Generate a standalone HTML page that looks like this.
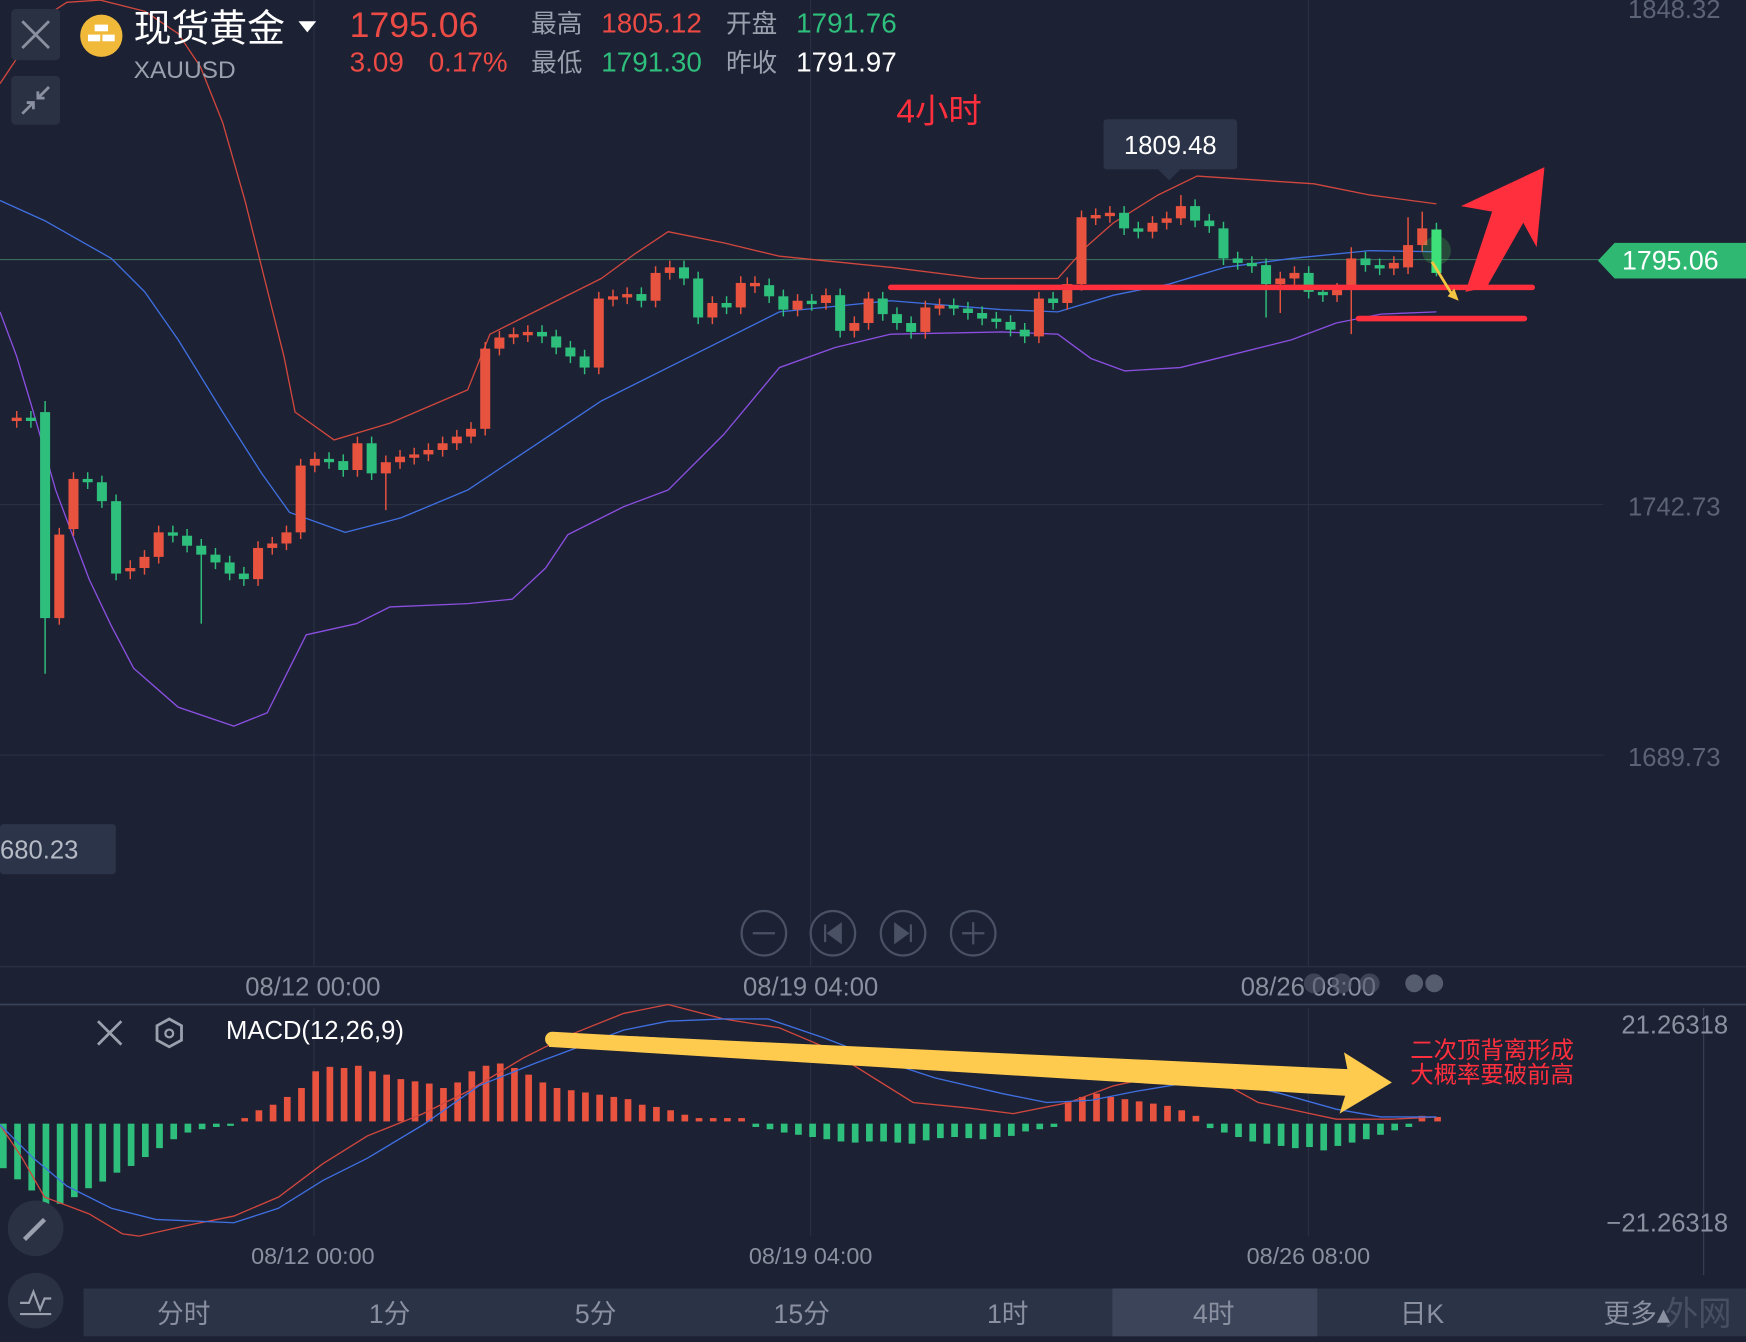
<!DOCTYPE html>
<html><head><meta charset="utf-8"><style>
html,body{margin:0;padding:0;background:#1c2133;width:1746px;height:1342px;overflow:hidden}
svg{display:block}
text{font-family:"Liberation Sans","Noto Sans CJK SC",sans-serif}
</style></head><body>
<svg width="1746" height="1342" viewBox="0 0 1568 1205" xmlns="http://www.w3.org/2000/svg">
<rect width="1568" height="1205" fill="#1c2133"/>
<g stroke="#2a3145" stroke-width="1">
<line x1="282" y1="0" x2="282" y2="868"/><line x1="728" y1="0" x2="728" y2="868"/><line x1="1175" y1="0" x2="1175" y2="868"/>
<line x1="0" y1="453" x2="1440" y2="453"/><line x1="0" y1="678" x2="1440" y2="678"/>
<line x1="282" y1="905" x2="282" y2="1110"/><line x1="728" y1="905" x2="728" y2="1110"/><line x1="1175" y1="905" x2="1175" y2="1110"/>
</g>
<line x1="0" y1="233" x2="1440" y2="233" stroke="#3a6a5a" stroke-width="1"/>
<line x1="0" y1="868" x2="1568" y2="868" stroke="#2c3347"/>
<line x1="0" y1="902" x2="1568" y2="902" stroke="#3a4257" stroke-width="1.5"/>
<line x1="1530" y1="905" x2="1530" y2="1145" stroke="#3a4257"/>
<polyline fill="none" stroke="#d0473e" stroke-width="1.2" stroke-linejoin="round" points="0,75 20,45 40,15 60,2 90,0 130,10 160,30 180,60 200,110 220,180 240,260 255,320 265,370 300,395 350,380 420,350 440,300 480,280 540,250 570,228 600,208 650,218 700,230 800,240 880,250 950,250 975,222 1000,200 1040,175 1075,158 1180,165 1230,175 1290,183"/>
<polyline fill="none" stroke="#3f6fe0" stroke-width="1.2" stroke-linejoin="round" points="0,180 40,198 100,232 130,262 160,305 200,370 235,425 260,460 310,478 360,465 420,440 480,400 540,360 620,320 700,280 800,270 900,278 950,280 1000,265 1050,255 1100,240 1160,232 1230,225 1290,226"/>
<polyline fill="none" stroke="#8a4fe0" stroke-width="1.2" stroke-linejoin="round" points="0,280 15,320 30,370 50,440 80,520 100,562 120,600 160,635 210,652 240,640 255,610 275,570 320,560 350,545 420,542 460,538 490,510 510,480 560,455 600,440 650,390 700,330 750,312 800,300 900,298 950,300 980,322 1010,333 1060,330 1100,320 1160,305 1200,290 1240,282 1290,280"/>
<path fill="none" stroke="#e8533f" stroke-width="1.3" d="M15 369V384 M53.25 474V561 M66 424V481 M117 503V520 M129.75 494V516 M142.5 472V506 M231.75 486V526 M244.5 482V498 M257.25 472V494 M270 412V484 M282.75 406V424 M321 392V428 M346.5 409V458 M359.25 404V421 M372 402V417 M384.75 398V414 M397.5 392V410 M410.25 386V404 M423 379V398 M435.75 307V391 M448.5 297V319 M461.25 294V309 M474 292V307 M537.75 262V336 M550.5 260V275 M563.25 258V273 M588.75 239V276 M601.5 234V251 M639.75 266V291 M665.25 248V282 M678 248V263 M716.25 264V284 M741.75 259V278 M767.25 284V303 M780 262V296 M831 270V304 M843.75 268V283 M933 262V308 M958.5 249V278 M971.25 189V261 M984 187V202 M996.75 185V200 M1035 194V214 M1047.75 190V206 M1060.5 175V202 M1149.75 244V281 M1162.5 239V256 M1200.75 254V271 M1213.5 222V300 M1251.75 230V247 M1264.5 195V246 M1277.25 190V226"/>
<path fill="none" stroke="#2fbf7c" stroke-width="1.3" d="M27.75 369V384 M40.5 360V605 M78.75 424V439 M91.5 427V456 M104.25 444V521 M155.25 472V487 M168 475V496 M180.75 484V560 M193.5 492V511 M206.25 499V521 M219 509V526 M295.5 406V421 M308.25 408V428 M333.75 392V431 M486.75 292V308 M499.5 296V318 M512.25 306V326 M525 314V336 M576 258V276 M614.25 234V256 M627 244V291 M652.5 266V282 M690.75 250V272 M703.5 260V284 M729 264V279 M754.5 259V303 M792.75 262V288 M805.5 276V296 M818.25 284V304 M856.5 268V283 M869.25 271V287 M882 275V292 M894.75 280V295 M907.5 283V302 M920.25 290V308 M945.75 262V278 M1009.5 185V211 M1022.25 199V214 M1073.25 179V204 M1086 192V209 M1098.75 199V238 M1111.5 226V242 M1124.25 230V245 M1137 232V285 M1175.25 239V268 M1188 256V271 M1226.25 226V244 M1239 232V247 M1290 200V248"/>
<g fill="#e8533f">
<rect x="10.5" y="375" width="9" height="3"/><rect x="48.75" y="480" width="9" height="75"/><rect x="61.5" y="430" width="9" height="45"/><rect x="112.5" y="510" width="9" height="3"/><rect x="125.25" y="500" width="9" height="10"/><rect x="138" y="478" width="9" height="22"/><rect x="227.25" y="492" width="9" height="28"/><rect x="240" y="488" width="9" height="4"/><rect x="252.75" y="478" width="9" height="10"/><rect x="265.5" y="418" width="9" height="60"/><rect x="278.25" y="412" width="9" height="6"/><rect x="316.5" y="398" width="9" height="24"/><rect x="342" y="415" width="9" height="10"/><rect x="354.75" y="410" width="9" height="5"/><rect x="367.5" y="408" width="9" height="3"/><rect x="380.25" y="404" width="9" height="4"/><rect x="393" y="398" width="9" height="6"/><rect x="405.75" y="392" width="9" height="6"/><rect x="418.5" y="385" width="9" height="7"/><rect x="431.25" y="313" width="9" height="72"/><rect x="444" y="303" width="9" height="10"/><rect x="456.75" y="300" width="9" height="3"/><rect x="469.5" y="298" width="9" height="3"/><rect x="533.25" y="268" width="9" height="62"/><rect x="546" y="266" width="9" height="3"/><rect x="558.75" y="264" width="9" height="3"/><rect x="584.25" y="245" width="9" height="25"/><rect x="597" y="240" width="9" height="5"/><rect x="635.25" y="272" width="9" height="13"/><rect x="660.75" y="254" width="9" height="22"/><rect x="673.5" y="254" width="9" height="3"/><rect x="711.75" y="270" width="9" height="8"/><rect x="737.25" y="265" width="9" height="7"/><rect x="762.75" y="290" width="9" height="7"/><rect x="775.5" y="268" width="9" height="22"/><rect x="826.5" y="276" width="9" height="22"/><rect x="839.25" y="274" width="9" height="3"/><rect x="928.5" y="268" width="9" height="34"/><rect x="954" y="255" width="9" height="17"/><rect x="966.75" y="195" width="9" height="60"/><rect x="979.5" y="193" width="9" height="3"/><rect x="992.25" y="191" width="9" height="3"/><rect x="1030.5" y="200" width="9" height="8"/><rect x="1043.25" y="196" width="9" height="4"/><rect x="1056" y="185" width="9" height="11"/><rect x="1145.25" y="250" width="9" height="5"/><rect x="1158" y="245" width="9" height="5"/><rect x="1196.25" y="260" width="9" height="5"/><rect x="1209" y="232" width="9" height="28"/><rect x="1247.25" y="236" width="9" height="5"/><rect x="1260" y="220" width="9" height="20"/><rect x="1272.75" y="205" width="9" height="15"/>
</g>
<g fill="#2fbf7c">
<rect x="23.25" y="375" width="9" height="3"/><rect x="36" y="370" width="9" height="185"/><rect x="74.25" y="430" width="9" height="3"/><rect x="87" y="433" width="9" height="17"/><rect x="99.75" y="450" width="9" height="65"/><rect x="150.75" y="478" width="9" height="3"/><rect x="163.5" y="481" width="9" height="9"/><rect x="176.25" y="490" width="9" height="8"/><rect x="189" y="498" width="9" height="7"/><rect x="201.75" y="505" width="9" height="10"/><rect x="214.5" y="515" width="9" height="5"/><rect x="291" y="412" width="9" height="3"/><rect x="303.75" y="414" width="9" height="8"/><rect x="329.25" y="398" width="9" height="27"/><rect x="482.25" y="298" width="9" height="4"/><rect x="495" y="302" width="9" height="10"/><rect x="507.75" y="312" width="9" height="8"/><rect x="520.5" y="320" width="9" height="10"/><rect x="571.5" y="264" width="9" height="6"/><rect x="609.75" y="240" width="9" height="10"/><rect x="622.5" y="250" width="9" height="35"/><rect x="648" y="272" width="9" height="4"/><rect x="686.25" y="256" width="9" height="10"/><rect x="699" y="266" width="9" height="12"/><rect x="724.5" y="270" width="9" height="3"/><rect x="750" y="265" width="9" height="32"/><rect x="788.25" y="268" width="9" height="14"/><rect x="801" y="282" width="9" height="8"/><rect x="813.75" y="290" width="9" height="8"/><rect x="852" y="274" width="9" height="3"/><rect x="864.75" y="277" width="9" height="4"/><rect x="877.5" y="281" width="9" height="5"/><rect x="890.25" y="286" width="9" height="3"/><rect x="903" y="289" width="9" height="7"/><rect x="915.75" y="296" width="9" height="6"/><rect x="941.25" y="268" width="9" height="4"/><rect x="1005" y="191" width="9" height="14"/><rect x="1017.75" y="205" width="9" height="3"/><rect x="1068.75" y="185" width="9" height="13"/><rect x="1081.5" y="198" width="9" height="5"/><rect x="1094.25" y="205" width="9" height="27"/><rect x="1107" y="232" width="9" height="4"/><rect x="1119.75" y="236" width="9" height="3"/><rect x="1132.5" y="238" width="9" height="17"/><rect x="1170.75" y="245" width="9" height="17"/><rect x="1183.5" y="262" width="9" height="3"/><rect x="1221.75" y="232" width="9" height="6"/><rect x="1234.5" y="238" width="9" height="3"/>
</g>
<circle cx="1290" cy="225" r="13" fill="#5cff5c" opacity="0.18"/>
<rect x="1285.5" y="206" width="9" height="39" fill="#3ee07a"/>
<line x1="800" y1="258" x2="1376" y2="258" stroke="#ff2f3d" stroke-width="5" stroke-linecap="round"/>
<line x1="1220" y1="286" x2="1369" y2="286" stroke="#ff2f3d" stroke-width="5" stroke-linecap="round"/>
<polygon points="1316,262 1335,258 1368,200 1380,222 1387,150 1312,185 1340,190" fill="#ff2f3d"/>
<line x1="1286" y1="235" x2="1305" y2="266" stroke="#f4c542" stroke-width="2.5"/>
<polygon points="1300,266 1310,270 1306,259" fill="#f4c542"/>
<g fill="#2fbf7c">
<rect x="0" y="1009" width="6" height="40"/><rect x="12.75" y="1009" width="6" height="50"/><rect x="25.5" y="1009" width="6" height="60"/><rect x="38.25" y="1009" width="6" height="78"/><rect x="51" y="1009" width="6" height="72"/><rect x="63.75" y="1009" width="6" height="66"/><rect x="76.5" y="1009" width="6" height="58"/><rect x="89.25" y="1009" width="6" height="52"/><rect x="102" y="1009" width="6" height="44"/><rect x="114.75" y="1009" width="6" height="38"/><rect x="127.5" y="1009" width="6" height="30"/><rect x="140.25" y="1009" width="6" height="22"/><rect x="153" y="1009" width="6" height="14"/><rect x="165.75" y="1009" width="6" height="8"/><rect x="178.5" y="1009" width="6" height="5"/><rect x="191.25" y="1009" width="6" height="3"/><rect x="204" y="1009" width="6" height="2"/>
<rect x="675.75" y="1009" width="6" height="3"/><rect x="688.5" y="1009" width="6" height="5"/><rect x="701.25" y="1009" width="6" height="8"/><rect x="714" y="1009" width="6" height="10"/><rect x="726.75" y="1009" width="6" height="12"/><rect x="739.5" y="1009" width="6" height="14"/><rect x="752.25" y="1009" width="6" height="16"/><rect x="765" y="1009" width="6" height="17"/><rect x="777.75" y="1009" width="6" height="16"/><rect x="790.5" y="1009" width="6" height="16"/><rect x="803.25" y="1009" width="6" height="17"/><rect x="816" y="1009" width="6" height="18"/><rect x="828.75" y="1009" width="6" height="15"/><rect x="841.5" y="1009" width="6" height="13"/><rect x="854.25" y="1009" width="6" height="12"/><rect x="867" y="1009" width="6" height="13"/><rect x="879.75" y="1009" width="6" height="14"/><rect x="892.5" y="1009" width="6" height="12"/><rect x="905.25" y="1009" width="6" height="11"/><rect x="918" y="1009" width="6" height="7"/><rect x="930.75" y="1009" width="6" height="5"/><rect x="943.5" y="1009" width="6" height="3"/>
<rect x="1083.75" y="1009" width="6" height="4"/><rect x="1096.5" y="1009" width="6" height="8"/><rect x="1109.25" y="1009" width="6" height="12"/><rect x="1122" y="1009" width="6" height="16"/><rect x="1134.75" y="1009" width="6" height="18"/><rect x="1147.5" y="1009" width="6" height="20"/><rect x="1160.25" y="1009" width="6" height="22"/><rect x="1173" y="1009" width="6" height="21"/><rect x="1185.75" y="1009" width="6" height="24"/><rect x="1198.5" y="1009" width="6" height="20"/><rect x="1211.25" y="1009" width="6" height="17"/><rect x="1224" y="1009" width="6" height="14"/><rect x="1236.75" y="1009" width="6" height="10"/><rect x="1249.5" y="1009" width="6" height="6"/><rect x="1262.25" y="1009" width="6" height="3"/>
</g>
<g fill="#e8533f">
<rect x="216.75" y="1004" width="6" height="3"/><rect x="229.5" y="997" width="6" height="10"/><rect x="242.25" y="992" width="6" height="15"/><rect x="255" y="985" width="6" height="22"/><rect x="267.75" y="977" width="6" height="30"/><rect x="280.5" y="962" width="6" height="45"/><rect x="293.25" y="958" width="6" height="49"/><rect x="306" y="959" width="6" height="48"/><rect x="318.75" y="957" width="6" height="50"/><rect x="331.5" y="962" width="6" height="45"/><rect x="344.25" y="965" width="6" height="42"/><rect x="357" y="969" width="6" height="38"/><rect x="369.75" y="971" width="6" height="36"/><rect x="382.5" y="973" width="6" height="34"/><rect x="395.25" y="977" width="6" height="30"/><rect x="408" y="972" width="6" height="35"/><rect x="420.75" y="962" width="6" height="45"/><rect x="433.5" y="957" width="6" height="50"/><rect x="446.25" y="955" width="6" height="52"/><rect x="459" y="959" width="6" height="48"/><rect x="471.75" y="965" width="6" height="42"/><rect x="484.5" y="972" width="6" height="35"/><rect x="497.25" y="977" width="6" height="30"/><rect x="510" y="979" width="6" height="28"/><rect x="522.75" y="981" width="6" height="26"/><rect x="535.5" y="983" width="6" height="24"/><rect x="548.25" y="985" width="6" height="22"/><rect x="561" y="987" width="6" height="20"/><rect x="573.75" y="992" width="6" height="15"/><rect x="586.5" y="994" width="6" height="13"/><rect x="599.25" y="997" width="6" height="10"/><rect x="612" y="1001" width="6" height="6"/><rect x="624.75" y="1004" width="6" height="3"/><rect x="637.5" y="1004" width="6" height="3"/><rect x="650.25" y="1004" width="6" height="3"/><rect x="663" y="1004" width="6" height="3"/>
<rect x="956.25" y="989" width="6" height="18"/><rect x="969" y="985" width="6" height="22"/><rect x="981.75" y="982" width="6" height="25"/><rect x="994.5" y="985" width="6" height="22"/><rect x="1007.25" y="987" width="6" height="20"/><rect x="1020" y="989" width="6" height="18"/><rect x="1032.75" y="991" width="6" height="16"/><rect x="1045.5" y="993" width="6" height="14"/><rect x="1058.25" y="997" width="6" height="10"/><rect x="1071" y="1002" width="6" height="5"/>
<rect x="1274" y="1002" width="6" height="5"/><rect x="1288" y="1003" width="6" height="4"/>
</g>
<polyline fill="none" stroke="#d0473e" stroke-width="1.2" points="0,1010 20,1040 40,1075 80,1090 110,1108 125,1110 170,1100 210,1092 250,1075 290,1045 330,1020 380,1000 420,980 470,950 510,930 560,910 600,902 650,915 700,923 740,940 820,990 870,995 910,1000 960,990 1000,975 1060,962 1090,968 1130,990 1200,1005 1250,1005 1290,1003"/>
<polyline fill="none" stroke="#3f6fe0" stroke-width="1.2" points="0,1010 30,1040 60,1065 100,1085 140,1095 210,1098 250,1085 290,1060 330,1040 380,1010 430,975 480,955 520,940 560,925 600,917 650,915 690,915 740,932 800,955 840,968 900,982 940,990 980,988 1020,980 1080,970 1120,975 1150,982 1200,996 1240,1003 1290,1003"/>
<polygon points="493,927 1210,960 1207,945 1250,972 1203,1000 1208,984 493,940" fill="#ffcb4f"/>
<line x1="496" y1="933" x2="1210" y2="972" stroke="#ffcb4f" stroke-width="13" stroke-linecap="round"/>
<text x="1340" y="950" fill="#ff2f3d" font-size="21" text-anchor="middle">二次顶背离形成</text>
<text x="1340" y="972" fill="#ff2f3d" font-size="21" text-anchor="middle">大概率要破前高</text>
<rect x="10" y="8" width="44" height="46" rx="4" fill="#2a3142"/>
<path d="M20 19 L44 43 M44 19 L20 43" stroke="#8a90a0" stroke-width="2.5"/>
<rect x="10" y="68" width="44" height="44" rx="4" fill="#2a3142"/>
<path d="M20 102 L30 92 M24 92 L30 92 L30 98 M44 78 L34 88 M34 82 L34 88 L40 88" stroke="#8a90a0" stroke-width="2.5" fill="none"/>
<circle cx="91" cy="32" r="19" fill="#f0b93a"/>
<rect x="85" y="22" width="12" height="6" fill="#fff"/><rect x="79" y="31" width="11" height="6" fill="#fff"/><rect x="92" y="31" width="11" height="6" fill="#fff"/>
<text x="120" y="37" fill="#fff" font-size="34">现货黄金</text>
<polygon points="268,19 284,19 276,29" fill="#fff"/>
<text x="120" y="70" fill="#9aa0ad" font-size="22">XAUUSD</text>
<text x="314" y="33" fill="#ec4a44" font-size="32">1795.06</text>
<text x="314" y="64" fill="#ec4a44" font-size="25">3.09</text>
<text x="385" y="64" fill="#ec4a44" font-size="25">0.17%</text>
<g font-size="25">
<text x="477" y="29" fill="#9aa0ad" font-size="23">最高</text>
<text x="540" y="29" fill="#ec4a44">1805.12</text>
<text x="652" y="29" fill="#9aa0ad" font-size="23">开盘</text>
<text x="715" y="29" fill="#2fbf7c">1791.76</text>
<text x="477" y="64" fill="#9aa0ad" font-size="23">最低</text>
<text x="540" y="64" fill="#2fbf7c">1791.30</text>
<text x="652" y="64" fill="#9aa0ad" font-size="23">昨收</text>
<text x="715" y="64" fill="#fff">1791.97</text>
</g>
<text x="805" y="110" fill="#ff2f3d" font-size="30">4小时</text>
<rect x="991" y="107" width="120" height="45" rx="3" fill="#2b3448"/>
<polygon points="1040,152 1060,152 1050,162" fill="#2b3448"/>
<text x="1051" y="138" fill="#fff" font-size="23" text-anchor="middle">1809.48</text>
<rect x="0" y="740" width="104" height="45" rx="3" fill="#2b3448"/>
<text x="0" y="771" fill="#b5bac5" font-size="23">680.23</text>
<polygon points="1435,234 1450,218 1568,218 1568,250 1450,250" fill="#2eb872"/>
<text x="1500" y="242" fill="#fff" font-size="24" text-anchor="middle">1795.06</text>
<g fill="#5c6376" font-size="23">
<text x="1462" y="16">1848.32</text><text x="1462" y="463">1742.73</text><text x="1462" y="688">1689.73</text>
</g>
<g stroke="#4a5165" stroke-width="2" fill="none">
<circle cx="686" cy="838" r="20"/><circle cx="748" cy="838" r="20"/><circle cx="811" cy="838" r="20"/><circle cx="874" cy="838" r="20"/>
<path d="M676 838 H696 M864 838 H884 M874 828 V848"/>
</g>
<path d="M741 830 V846 M755 830 L744 838 L755 846Z M818 830 V846 M804 830 L815 838 L804 846Z" fill="#4a5165" stroke="#4a5165" stroke-width="2"/>
<g fill="#8a90a0" font-size="23" text-anchor="middle">
<text x="281" y="894">08/12 00:00</text><text x="728" y="894">08/19 04:00</text><text x="1175" y="894">08/26 08:00</text>
</g>
<g fill="#555c6e"><circle cx="1270" cy="883" r="8"/><circle cx="1288" cy="883" r="8"/><circle cx="1180" cy="883" r="9" opacity=".6"/><circle cx="1205" cy="883" r="9" opacity=".6"/><circle cx="1230" cy="883" r="9" opacity=".6"/></g>
<path d="M88 917 L109 938 M109 917 L88 938" stroke="#9aa0ad" stroke-width="2.5"/>
<polygon points="152,915 163,921 163,934 152,940 141,934 141,921" fill="none" stroke="#9aa0ad" stroke-width="2.5"/>
<circle cx="152" cy="928" r="3.5" fill="none" stroke="#9aa0ad" stroke-width="2"/>
<text x="203" y="933" fill="#fff" font-size="23">MACD(12,26,9)</text>
<text x="1552" y="928" fill="#8a90a0" font-size="23" text-anchor="end">21.26318</text>
<text x="1552" y="1106" fill="#8a90a0" font-size="23" text-anchor="end">−21.26318</text>
<g fill="#8a90a0" font-size="21" text-anchor="middle">
<text x="281" y="1135">08/12 00:00</text><text x="728" y="1135">08/19 04:00</text><text x="1175" y="1135">08/26 08:00</text>
</g>
<circle cx="32" cy="1103" r="25" fill="#2a3142"/>
<path d="M22 1113 L40 1095" stroke="#9aa0ad" stroke-width="4"/>
<circle cx="32" cy="1168" r="25" fill="#2a3142"/>
<path d="M18 1170 L26 1170 L30 1160 L36 1176 L40 1166 L46 1166 M18 1180 H46" stroke="#9aa0ad" stroke-width="2" fill="none"/>
<rect x="75" y="1157" width="1493" height="43" fill="#2b3347"/>
<rect x="999" y="1157" width="184" height="43" fill="#3b4459"/>
<g fill="#8a90a0" font-size="24" text-anchor="middle">
<text x="165" y="1188">分时</text><text x="350" y="1188">1分</text><text x="535" y="1188">5分</text><text x="720" y="1188">15分</text><text x="905" y="1188">1时</text><text x="1090" y="1188">4时</text><text x="1277" y="1188">日K</text><text x="1470" y="1188">更多▴</text>
</g>
<text x="1525" y="1190" fill="#555c6e" font-size="30" text-anchor="middle" opacity=".7">外网</text>
</svg>
</body></html>
